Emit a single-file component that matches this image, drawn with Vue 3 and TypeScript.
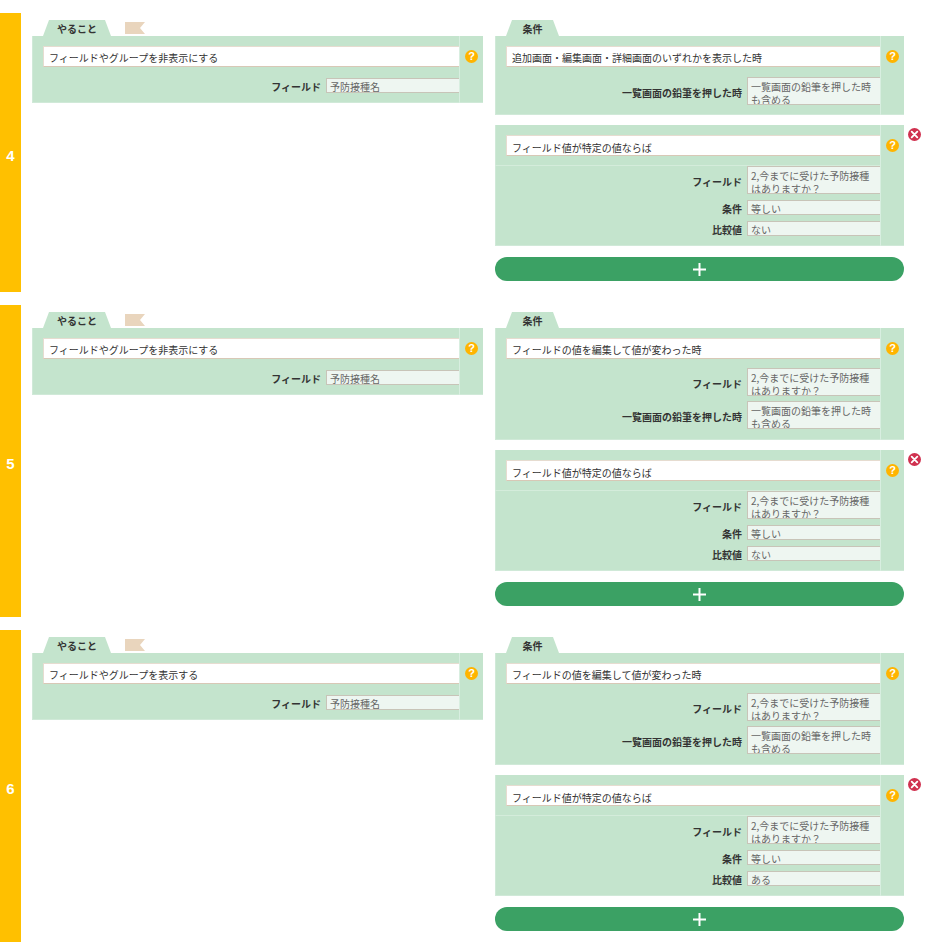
<template>
  <div class="page">
    <section v-for="b in blocks" :key="b.no" class="rule">
      <div class="num">{{ b.no }}</div>
      <div class="side side-do">
        <div class="tabs">
          <span class="tab tab-do">やること</span>
          <span class="flag"></span>
        </div>
        <div class="panel">
          <div class="body">
            <div class="head"><div class="sel">{{ b.action }}</div></div>
            <div class="row">
              <span class="lbl">フィールド</span>
              <span class="val">予防接種名</span>
            </div>
          </div>
          <div class="help-col"><i class="help">?</i></div>
        </div>
      </div>
      <div class="side side-if">
        <div class="tabs">
          <span class="tab tab-if">条件</span>
        </div>
        <div
          v-for="(c, i) in b.conds"
          :key="i"
          class="panel cond"
          :class="`cond-${c.kind}`"
        >
          <div class="body">
            <div class="head"><div class="sel">{{ c.title }}</div></div>
            <div v-for="r in c.rows" :key="r.label" class="row">
              <span class="lbl">{{ r.label }}</span>
              <span class="val" :class="{ tall: r.value.length > 14 }">{{ r.value }}</span>
            </div>
          </div>
          <div class="help-col"><i class="help">?</i></div>
          <svg v-if="i === 1" class="del" viewBox="0 0 14 14" aria-label="削除">
            <circle cx="7" cy="7" r="7" fill="#d0314f" />
            <path d="M4 4l6 6M10 4l-6 6" stroke="#fff" stroke-width="2" stroke-linecap="round" />
          </svg>
        </div>
        <button class="add" aria-label="追加">
          <svg viewBox="0 0 13 13" width="13" height="13">
            <path d="M6.5 0v13M0 6.5h13" stroke="#fff" stroke-width="2" />
          </svg>
        </button>
      </div>
    </section>
  </div>
</template>

<script setup lang="ts">
interface Row {
  label: string
  value: string
}
interface Cond {
  kind: 'screen' | 'edit' | 'value'
  title: string
  rows: Row[]
}
interface Block {
  no: number
  action: string
  conds: Cond[]
}

const question = '2,今までに受けた予防接種はありますか？'
const pencilRow: Row = { label: '一覧画面の鉛筆を押した時', value: '一覧画面の鉛筆を押した時も含める' }

const valueCond = (value: string): Cond => ({
  kind: 'value',
  title: 'フィールド値が特定の値ならば',
  rows: [
    { label: 'フィールド', value: question },
    { label: '条件', value: '等しい' },
    { label: '比較値', value },
  ],
})

const editCond: Cond = {
  kind: 'edit',
  title: 'フィールドの値を編集して値が変わった時',
  rows: [{ label: 'フィールド', value: question }, pencilRow],
}

const blocks: Block[] = [
  {
    no: 4,
    action: 'フィールドやグループを非表示にする',
    conds: [
      { kind: 'screen', title: '追加画面・編集画面・詳細画面のいずれかを表示した時', rows: [pencilRow] },
      valueCond('ない'),
    ],
  },
  { no: 5, action: 'フィールドやグループを非表示にする', conds: [editCond, valueCond('ない')] },
  { no: 6, action: 'フィールドやグループを表示する', conds: [editCond, valueCond('ある')] },
]
</script>

<style>
html,
body {
  margin: 0;
  background: #fff;
}
</style>

<style scoped>
.page {
  padding-top: 13px;
  font-family: "Noto Sans CJK JP", "Liberation Sans", sans-serif;
  color: #333;
  font-size: 10px;
}

.rule {
  display: flex;
  margin-bottom: 13px;
}

.num {
  width: 21px;
  flex: none;
  box-sizing: border-box;
  padding-top: 5px;
  background: #ffc000;
  color: #fff;
  font-family: "Liberation Sans", sans-serif;
  font-size: 15px;
  font-weight: 700;
  display: flex;
  align-items: center;
  justify-content: center;
}

.side {
  flex: none;
  padding: 7px 0 11px;
}

.side-do {
  width: 451px;
  margin-left: 11px;
}

.side-if {
  width: 409px;
  margin-left: 12px;
}

.tabs {
  display: flex;
  align-items: flex-end;
  height: 16px;
  padding-left: 11px;
}

.tab {
  height: 16px;
  line-height: 18px;
  text-align: center;
  font-weight: 700;
  background: #c4e4cd;
  clip-path: polygon(6px 0, calc(100% - 6px) 0, 100% 100%, 0 100%);
}

.tab-do {
  width: 68px;
}

.tab-if {
  width: 53px;
}

.flag {
  width: 20px;
  height: 12px;
  margin: 0 0 2px 14px;
  background: #e9d5bd;
  clip-path: polygon(0 0, 100% 0, 75% 50%, 100% 100%, 0 100%);
}

.panel {
  position: relative;
  display: flex;
  background: #c4e4cd;
  box-shadow: inset 1px -1px 0 #d0e9d8;
}

.cond + .cond {
  margin-top: 10px;
}

.body {
  flex: 1;
  min-width: 0;
  padding-bottom: 10px;
}

.cond-edit .body {
  padding-bottom: 11px;
}

.head {
  padding: 10px 0 11px 11px;
}

.cond-screen .head {
  padding-bottom: 10px;
}

.cond-edit .head {
  padding-bottom: 9px;
}

.cond-value .head {
  padding-bottom: 9px;
  border-bottom: 1px solid #d4ecdb;
}

.sel {
  height: 19px;
  line-height: 22px;
  padding-left: 5px;
  background: #fff;
  border: 1px solid #e6dcd0;
  border-right: 0;
  border-bottom-color: #d8c8b6;
  white-space: nowrap;
}

.cond-value .sel {
  line-height: 24px;
}

.row {
  display: flex;
  justify-content: flex-end;
  align-items: center;
}

.row + .row {
  margin-top: 6px;
}

.cond-edit .row + .row {
  margin-top: 5px;
}

.lbl {
  padding-top: 3px;
  line-height: 12px;
  font-weight: 700;
  margin-right: 5px;
  white-space: nowrap;
}

.val {
  width: 133px;
  flex: none;
  box-sizing: border-box;
  height: 15px;
  line-height: 16px;
  padding: 0 4px 0 3px;
  overflow: hidden;
  color: #666;
  background: #eef6f1;
  border-style: solid;
  border-color: #c8c4b8;
  border-width: 1px 0 1px 1px;
}

.val.tall {
  height: 28px;
  padding-top: 2px;
  line-height: 13px;
}

.help-col {
  width: 24px;
  flex: none;
  border-left: 1px solid #d8eee0;
  display: flex;
  justify-content: center;
  padding-top: 14px;
  box-sizing: border-box;
}

.help {
  width: 13px;
  height: 13px;
  border-radius: 50%;
  background: #ffb400;
  color: #fff;
  font: normal 700 11px/13px "Liberation Sans", sans-serif;
  text-align: center;
}

.del {
  position: absolute;
  top: 3px;
  right: -17px;
  width: 13px;
  height: 13px;
}

.add {
  display: flex;
  align-items: center;
  justify-content: center;
  width: 100%;
  height: 24px;
  margin-top: 11px;
  padding: 0;
  border: 0;
  border-radius: 12px;
  background: #3ba164;
}
</style>
